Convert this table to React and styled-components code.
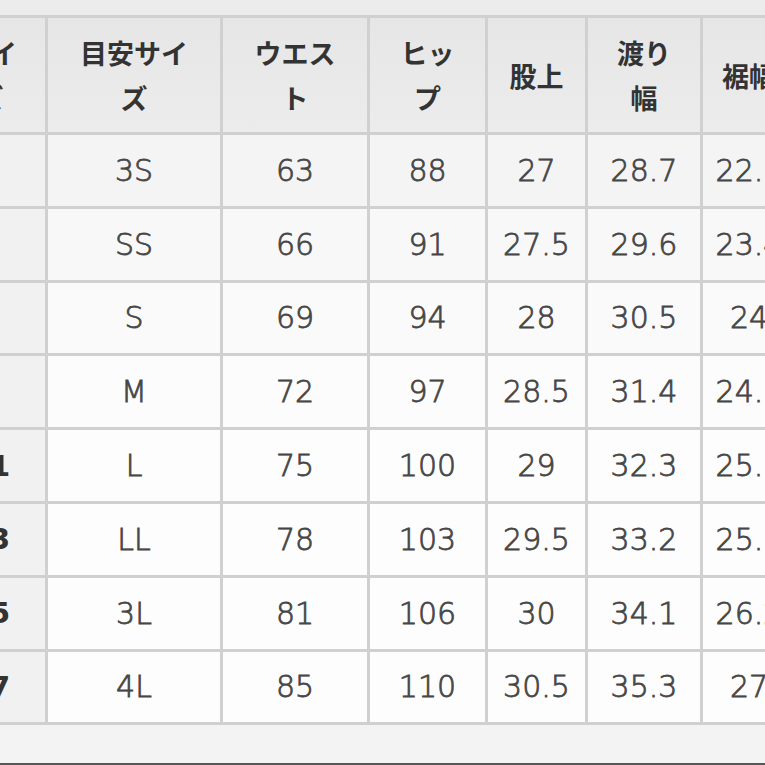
import React from "react";
import styled, { createGlobalStyle } from "styled-components";

const GlobalStyle = createGlobalStyle`
  html, body {
    margin: 0;
    padding: 0;
    background: #ececec;
    overflow: hidden;
  }
  body {
    font-family: "Noto Sans CJK JP", "Noto Sans", sans-serif;
  }
`;

const Page = styled.div`
  width: 765px;
  height: 765px;
  display: flex;
  flex-direction: column;
  background: #ececec;
  overflow: hidden;
  box-sizing: border-box;
  border-bottom: 2px solid #585858;
`;

const TableWrap = styled.div`
  padding-top: 15px;
  margin-left: -68px;
`;

const Footer = styled.div`
  flex: 1;
  background: #f3f3f3;
`;

const Table = styled.table`
  border-collapse: separate;
  border-spacing: 3px;
  background: #d0d0d0;
  table-layout: fixed;
  width: 864px;
`;

const Col = styled.col`
  width: ${(p) => p.$w}px;
`;

const HeadCell = styled.th`
  height: 114px;
  padding: 0;
  background: linear-gradient(#e6e6e6, #ececec);
  color: #333;
  font-weight: 700;
  font-size: 27px;
  line-height: 45px;
  text-align: center;
  vertical-align: middle;
  white-space: nowrap;
  overflow: hidden;
`;

const RowHead = styled.th`
  height: 70.8px;
  padding: 0;
  background: #f1f1f1;
  color: #333;
  font-family: "DejaVu Sans", sans-serif;
  font-weight: 700;
  font-size: 29px;
  text-align: center;
  vertical-align: middle;
`;

const Cell = styled.td`
  height: 70.8px;
  padding: 0;
  background: ${(p) => p.$bg};
  color: #464646;
  font-family: "DejaVu Sans", sans-serif;
  font-weight: 300;
  font-size: 30px;
  -webkit-text-stroke: 0.8px #464646;
  text-align: center;
  vertical-align: middle;
  white-space: nowrap;
`;

const widths = [110, 172, 144, 115, 97, 112, 92];

const headers = [
  ["サイ", "ズ"],
  ["目安サイ", "ズ"],
  ["ウエス", "ト"],
  ["ヒッ", "プ"],
  ["股上"],
  ["渡り", "幅"],
  ["裾幅"],
];

const rows = [
  ["3", "3S", "63", "88", "27", "28.7", "22.9"],
  ["5", "SS", "66", "91", "27.5", "29.6", "23.4"],
  ["7", "S", "69", "94", "28", "30.5", "24"],
  ["9", "M", "72", "97", "28.5", "31.4", "24.5"],
  ["11", "L", "75", "100", "29", "32.3", "25.1"],
  ["13", "LL", "78", "103", "29.5", "33.2", "25.6"],
  ["15", "3L", "81", "106", "30", "34.1", "26.2"],
  ["17", "4L", "85", "110", "30.5", "35.3", "27"],
];

const rowBg = ["#f4f4f4", "#f8f8f8", "#fafafa", "#fcfcfc", "#fdfdfd", "#fdfdfd", "#fdfdfd", "#fdfdfd"];

export default function App() {
  return (
    <>
      <GlobalStyle />
      <Page>
        <TableWrap>
          <Table>
            <colgroup>
              {widths.map((w, i) => (
                <Col key={i} $w={w} />
              ))}
            </colgroup>
            <thead>
              <tr>
                {headers.map((h, i) => (
                  <HeadCell key={i}>
                    {h.map((line, j) => (
                      <React.Fragment key={j}>
                        {j > 0 && <br />}
                        {line}
                      </React.Fragment>
                    ))}
                  </HeadCell>
                ))}
              </tr>
            </thead>
            <tbody>
              {rows.map((r, i) => (
                <tr key={i}>
                  <RowHead>{r[0]}</RowHead>
                  {r.slice(1).map((v, j) => (
                    <Cell key={j} $bg={rowBg[i]}>
                      {v}
                    </Cell>
                  ))}
                </tr>
              ))}
            </tbody>
          </Table>
        </TableWrap>
        <Footer />
      </Page>
    </>
  );
}
